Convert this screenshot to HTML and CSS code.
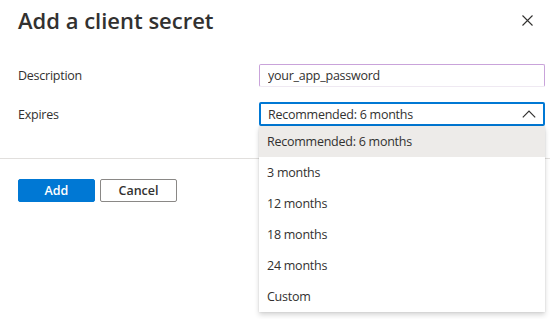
FILE: index.html
```html
<!DOCTYPE html>
<html lang="en">
<head>
    <meta charset="UTF-8">
    <meta name="viewport" content="width=device-width, initial-scale=1.0">
    <title>Add a client secret</title>
    <link rel="stylesheet" href="styles.css">
</head>
<body>
<div class="panel">
    <div class="panel-header">
        <h1 class="panel-title">Add a client secret</h1>
        <button class="close-btn" aria-label="Close">
            <svg width="11" height="11" viewBox="0 0 11 11"><path d="M0.5 0.5L10.5 10.5M10.5 0.5L0.5 10.5" stroke="#323130" stroke-width="1.1" fill="none"/></svg>
        </button>
    </div>

    <form class="secret-form">
        <div class="form-row">
            <label for="description">Description</label>
            <input type="text" id="description" class="text-input" value="your_app_password">
        </div>

        <div class="form-row">
            <label for="expires">Expires</label>
            <div class="dropdown">
                <div class="dropdown-field" id="expires">
                    <span>Recommended: 6 months</span>
                    <svg width="14" height="8" viewBox="0 0 14 8"><path d="M0.8 7.3L7 1.1L13.2 7.3" stroke="#323130" stroke-width="1.2" fill="none"/></svg>
                </div>
                <ul class="dropdown-list">
                    <li class="selected">Recommended: 6 months</li>
                    <li>3 months</li>
                    <li>12 months</li>
                    <li>18 months</li>
                    <li>24 months</li>
                    <li>Custom</li>
                </ul>
            </div>
        </div>
    </form>

    <div class="panel-footer">
        <button class="btn btn-primary">Add</button>
        <button class="btn btn-default">Cancel</button>
    </div>
</div>
</body>
</html>
```

FILE: styles.css
```css
body {
    margin: 0;
    font-family: "Open Sans", "Noto Sans", sans-serif;
    font-size: 12.5px;
    letter-spacing: -0.25px;
    color: #323130;
    background-color: #ffffff;
}
.panel {
    width: 550px;
    min-height: 319px;
}
.panel-header {
    display: flex;
    align-items: center;
    justify-content: space-between;
    padding: 5px 17px 0 18px;
    height: 30px;
}
.panel-title {
    margin: 0;
    font-size: 22px;
    font-weight: 600;
    letter-spacing: 0;
    line-height: 30px;
    color: #323130;
}
.close-btn {
    border: none;
    background: none;
    padding: 0;
    width: 11px;
    height: 11px;
    display: flex;
    cursor: pointer;
}
.secret-form {
    padding: 29px 5px 0 18px;
    height: 94px;
}
.form-row {
    display: flex;
    align-items: center;
    margin-bottom: 15px;
}
.form-row label {
    width: 241px;
}
.text-input {
    width: 286px;
    height: 23px;
    box-sizing: border-box;
    padding: 0 8px;
    font-family: inherit;
    font-size: 12.5px;
    letter-spacing: -0.25px;
    color: #323130;
    border: 1px solid #c9a3da;
    border-bottom-color: #efe9f2;
    border-radius: 2px;
    outline: none;
}
.dropdown {
    position: relative;
    width: 286px;
}
.dropdown-field {
    display: flex;
    align-items: center;
    justify-content: space-between;
    height: 24px;
    box-sizing: border-box;
    padding: 0 7px 0 7px;
    border: 2px solid #0078d4;
    border-radius: 2px;
}
.dropdown-list {
    position: absolute;
    top: 24px;
    left: 0;
    width: 286px;
    margin: 0;
    padding: 0;
    list-style: none;
    background: #ffffff;
    box-shadow: 0 3px 5px rgba(0, 0, 0, 0.16), 0 0 2px rgba(0, 0, 0, 0.1);
    z-index: 2;
}
.dropdown-list li {
    height: 31px;
    line-height: 31px;
    padding-left: 8px;
}
.dropdown-list li.selected {
    background-color: #edebe9;
}
.panel-footer {
    border-top: 1px solid #e1dfdd;
    padding: 20px 18px;
    display: flex;
    gap: 5px;
}
.btn {
    width: 77px;
    height: 23px;
    box-sizing: border-box;
    font-family: inherit;
    font-size: 12.5px;
    font-weight: 600;
    border-radius: 2px;
    cursor: pointer;
}
.btn-primary {
    background-color: #0078d4;
    border: 1px solid #0078d4;
    color: #ffffff;
}
.btn-default {
    background-color: #ffffff;
    border: 1px solid #8a8886;
    color: #323130;
}
```
